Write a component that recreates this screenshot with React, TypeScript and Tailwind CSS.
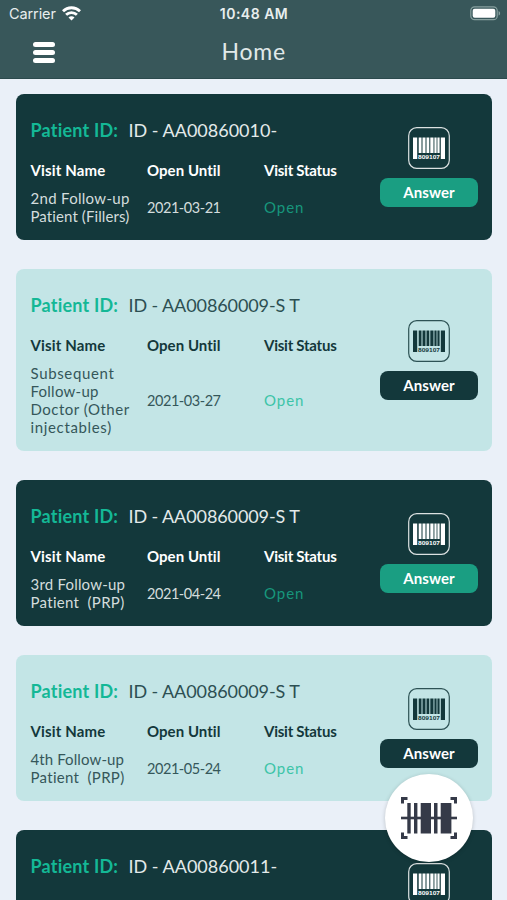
import React from 'react';

type Visit = {
  id: string;
  idTracking: string;
  lines: { text: string; tracking: string }[];
  until?: string;
  dark: boolean;
};

const visits: Visit[] = [
  {
    id: 'ID - AA00860010-',
    idTracking: 'tracking-[0px]',
    lines: [
      { text: '2nd Follow-up', tracking: 'tracking-[0.3px]' },
      { text: 'Patient (Fillers)', tracking: 'tracking-[0.1px]' },
    ],
    until: '2021-03-21',
    dark: true,
  },
  {
    id: 'ID - AA00860009-S T',
    idTracking: 'tracking-[-0.1px]',
    lines: [
      { text: 'Subsequent', tracking: 'tracking-[0.65px]' },
      { text: 'Follow-up', tracking: 'tracking-[0.25px]' },
      { text: 'Doctor (Other', tracking: 'tracking-[0.5px]' },
      { text: 'injectables)', tracking: 'tracking-[0.65px]' },
    ],
    until: '2021-03-27',
    dark: false,
  },
  {
    id: 'ID - AA00860009-S T',
    idTracking: 'tracking-[-0.1px]',
    lines: [
      { text: '3rd Follow-up', tracking: 'tracking-[0.2px]' },
      { text: 'Patient  (PRP)', tracking: 'tracking-[0.3px]' },
    ],
    until: '2021-04-24',
    dark: true,
  },
  {
    id: 'ID - AA00860009-S T',
    idTracking: 'tracking-[-0.1px]',
    lines: [
      { text: '4th Follow-up', tracking: 'tracking-[0.1px]' },
      { text: 'Patient  (PRP)', tracking: 'tracking-[0.3px]' },
    ],
    until: '2021-05-24',
    dark: false,
  },
  {
    id: 'ID - AA00860011-',
    idTracking: 'tracking-[0px]',
    lines: [],
    dark: true,
  },
];

function Barcode() {
  return (
    <svg width="42" height="42" viewBox="0 0 42 42" fill="none">
      <rect x="0.7" y="0.7" width="40.6" height="40.6" rx="8" stroke="currentColor" strokeWidth="1.2" strokeOpacity="0.85" />
      <g fill="currentColor">
        <rect x="5" y="10.5" width="4.2" height="21.5" />
        <rect x="10.7" y="10.5" width="2.8" height="15.5" />
        <rect x="14.5" y="10.5" width="3" height="15.5" />
        <rect x="18.5" y="10.5" width="2.8" height="15.5" />
        <rect x="22.3" y="10.5" width="3.2" height="15.5" />
        <rect x="26.4" y="10.5" width="2.2" height="15.5" />
        <rect x="29.4" y="10.5" width="2.2" height="15.5" />
        <rect x="32.8" y="10.5" width="4.2" height="21.5" />
        <text x="10" y="31.9" fontSize="5.6" fontWeight="700" fontFamily="Liberation Sans, sans-serif" textLength="22" lengthAdjust="spacingAndGlyphs">
          809107
        </text>
      </g>
    </svg>
  );
}

function VisitDetails({ visit }: { visit: Visit }) {
  const { dark } = visit;
  return (
    <>
      <div className="mt-[18.5px] grid h-[18px] grid-cols-[116.5px_117px_116px] items-center text-[15px] font-bold leading-[18px]">
        <span className="tracking-[0.15px]">Visit Name</span>
        <span className="tracking-[0.05px]">Open Until</span>
        <span className="tracking-[-0.25px]">Visit Status</span>
      </div>
      <div
        className={`mt-[10.5px] mb-px grid grid-cols-[116.5px_117px_116px] items-center text-[15px] leading-[18px] ${
          dark ? 'text-[#d3dddd]' : 'text-[#35575a]'
        }`}
      >
        <div className="whitespace-pre">
          {visit.lines.map((line) => (
            <div key={line.text} className={line.tracking}>
              {line.text}
            </div>
          ))}
        </div>
        <span className="pt-px text-[14.5px] tracking-[-0.45px]">{visit.until}</span>
        <span className={`tracking-[0.95px] ${dark ? 'text-[#17967c]' : 'text-[#3cc4a8]'}`}>Open</span>
      </div>
    </>
  );
}

function Card({ visit }: { visit: Visit }) {
  const { dark } = visit;
  return (
    <article
      className={`flex min-h-[146px] shrink-0 rounded-lg pl-[15px] ${
        dark ? 'bg-[#13383b] text-white' : 'bg-[#c3e5e6] text-[#13383b]'
      }`}
    >
      <div className="w-[349.5px] pt-6 pb-[14px]">
        <h2 className="flex h-6 items-center whitespace-pre text-[18px]">
          <span className="w-[98px] font-bold tracking-[0.2px] text-[#14b896]">Patient ID:</span>
          <span className={`${visit.idTracking} ${dark ? 'text-[#e3eaea]' : 'text-[#2c4f52]'}`}>{visit.id}</span>
        </h2>
        {visit.until && <VisitDetails visit={visit} />}
      </div>
      <div className="flex w-[98px] flex-col items-center self-center">
        <Barcode />
        <button
          className={`mt-[9px] flex h-[28.5px] w-full items-center justify-center rounded-lg text-[15px] font-bold tracking-[0.1px] text-white ${
            dark ? 'bg-[#1a9e82]' : 'bg-[#13383b]'
          }`}
        >
          Answer
        </button>
      </div>
    </article>
  );
}

function StatusBar() {
  return (
    <div className="grid h-[27px] grid-cols-3 items-center pl-[9px] pr-[6px] font-['Inter','Liberation_Sans',sans-serif] text-[14px] text-[#e8eeee]">
      <div className="flex items-center gap-[6px]">
        <span className="text-[14.5px] tracking-[-0.1px]">Carrier</span>
        <svg width="19" height="15" viewBox="0 0 19 15" fill="none" stroke="white" strokeWidth="2.8">
          <path d="M1 5.200a12.200 12.200 0 0 1 17 0" />
          <path d="M4.100 8.800a7.600 7.600 0 0 1 10.800 0" />
          <path d="M9.500 14.500 6.500 11.500a4.200 4.200 0 0 1 6 0Z" fill="white" stroke="none" />
        </svg>
      </div>
      <span className="-ml-[2px] text-center font-semibold tracking-[0.5px]">10:48 AM</span>
      <svg className="justify-self-end" width="31" height="15" viewBox="0 0 31 15" fill="none">
        <rect x="0.8" y="0.8" width="26.4" height="12.9" rx="3.8" stroke="#87a09f" strokeWidth="1.2" />
        <rect x="2.7" y="2.7" width="22.6" height="9.1" rx="2" fill="white" />
        <path d="M28.600 5v4.600c2-.8 2-3.800 0-4.600Z" fill="#87a09f" />
      </svg>
    </div>
  );
}

export default function App() {
  return (
    <div className="relative flex h-[900px] w-[507px] flex-col overflow-hidden bg-[#eaf0f8] font-['Lato','Liberation_Sans',sans-serif]">
      <header className="h-[79px] shrink-0 border-b border-[#2c4a4d] bg-[#38575a]">
        <StatusBar />
        <div className="grid h-[50px] grid-cols-[1fr_auto_1fr] items-center pl-[32.5px] pr-8">
          <button className="flex w-[22.5px] flex-col gap-[3px]" aria-label="Menu">
            <span className="h-[5px] rounded-full bg-white" />
            <span className="h-[5px] rounded-full bg-white" />
            <span className="h-[5px] rounded-full bg-white" />
          </button>
          <h1 className="-mt-px text-[23px] tracking-[0.8px] text-[#e1e9e9]">Home</h1>
        </div>
      </header>
      <main className="flex flex-col gap-[29px] pl-[15.5px] pr-[15px] pt-[15px]">
        {visits.map((visit, i) => (
          <Card key={i} visit={visit} />
        ))}
      </main>
      <button
        className="absolute left-[384.500px] top-[774px] flex h-[88px] w-[88px] items-center justify-center rounded-full bg-white shadow-[0_1px_4px_rgba(0,0,0,0.2)]"
        aria-label="Scan"
      >
        <svg width="58" height="44" viewBox="0 0 58 44" fill="#353a48">
          <path d="M1 1h6.500v3H4v3.500H1ZM57 1h-6.500v3H54v3.500h3ZM1 43h6.500v-3H4v-3.500H1ZM57 43h-6.500v-3H54v-3.500h3Z" />
          <rect x="1" y="20.700" width="56" height="2.600" />
          <rect x="7.300" y="7" width="3.400" height="30.500" />
          <rect x="14" y="7" width="3.400" height="30.500" />
          <rect x="20.700" y="7" width="10.300" height="30.500" />
          <rect x="34" y="7" width="3.500" height="30.500" />
          <rect x="40.700" y="7" width="10.700" height="30.500" />
        </svg>
      </button>
    </div>
  );
}
